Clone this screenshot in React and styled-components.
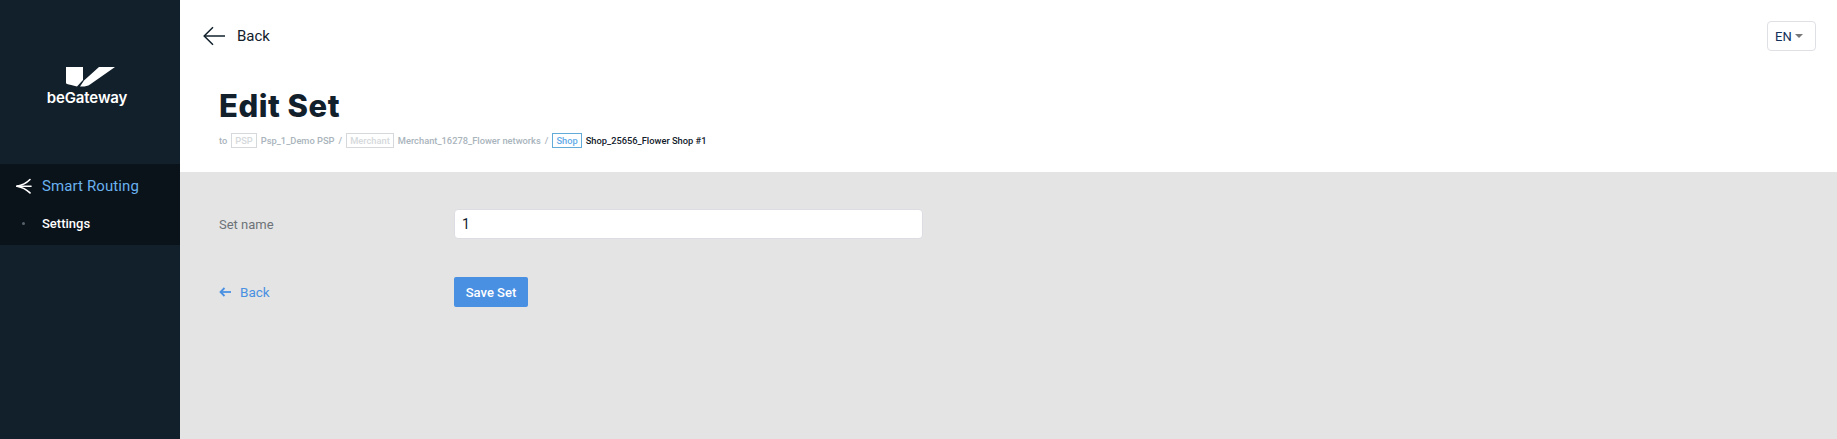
import React from 'react';
import styled, { createGlobalStyle } from 'styled-components';

const GlobalStyle = createGlobalStyle`
  html, body {
    margin: 0;
    padding: 0;
    height: 100%;
    overflow: hidden;
    background: #e4e4e4;
    font-family: Roboto, "Liberation Sans", sans-serif;
  }
  * {
    box-sizing: border-box;
  }
`;

const Page = styled.div`
  display: flex;
  width: 100%;
  height: 100vh;
`;

const Sidebar = styled.aside`
  flex: 0 0 180px;
  background: #12202c;
  display: flex;
  flex-direction: column;
`;

const LogoWrap = styled.div`
  height: 164px;
  padding-top: 67px;
  display: flex;
  flex-direction: column;
  align-items: center;
`;

const LogoName = styled.span`
  margin: 3px 6px 0 0;
  color: #fff;
  font-family: Inter, sans-serif;
  font-size: 15px;
  font-weight: 600;
  line-height: 16px;
  letter-spacing: -0.1px;
`;

const Menu = styled.nav`
  height: 81px;
  background: #0a121a;
  display: flex;
  flex-direction: column;
`;

const MenuTitle = styled.div`
  height: 44px;
  padding-left: 16px;
  display: flex;
  align-items: center;
  gap: 10px;
  color: #69b1ee;
  font-size: 15px;
  letter-spacing: 0.1px;
`;

const MenuItem = styled.div`
  height: 30px;
  padding-left: 22px;
  display: flex;
  align-items: center;
  gap: 17px;
  color: #fff;
  font-size: 13px;
  font-weight: 500;
`;

const Dot = styled.span`
  width: 3px;
  height: 3px;
  border-radius: 50%;
  background: #56626c;
`;

const Main = styled.main`
  flex: 1;
  display: flex;
  flex-direction: column;
  min-width: 0;
`;

const Header = styled.header`
  height: 172px;
  background: #fff;
  padding: 21px 21px 0 23px;
  display: flex;
  flex-direction: column;
`;

const TopRow = styled.div`
  display: flex;
  justify-content: space-between;
  align-items: flex-start;
  height: 30px;
`;

const TopBack = styled.a`
  display: flex;
  align-items: center;
  gap: 12px;
  height: 29px;
  color: #12202c;
  font-size: 15px;
`;

const LangButton = styled.button`
  width: 49px;
  height: 30px;
  padding: 0 0 0 7px;
  background: #fff;
  border: 1px solid #dfdfe6;
  border-radius: 4px;
  display: flex;
  align-items: center;
  gap: 3px;
  color: #12305a;
  font-family: Roboto, sans-serif;
  font-size: 13px;
`;

const Caret = styled.span`
  width: 0;
  height: 0;
  border-left: 4px solid transparent;
  border-right: 4px solid transparent;
  border-top: 4px solid #777;
`;

const Heading = styled.div`
  padding-left: 16px;
`;

const Title = styled.h1`
  margin: 36px 0 0;
  color: #12202c;
  font-family: Inter, sans-serif;
  font-size: 31px;
  font-weight: 800;
  line-height: 38px;
  letter-spacing: 0.5px;
`;

const Crumbs = styled.div`
  margin-top: 7px;
  display: flex;
  align-items: center;
  height: 16px;
  color: #a9b4bc;
  font-size: 9.3px;
  font-weight: 500;
`;

const Tag = styled.span`
  height: 15px;
  padding: 0 3px;
  margin: 0 4px;
  display: inline-flex;
  align-items: center;
  border: 1px solid ${p => (p.$active ? '#63abd8' : '#d5d9dc')};
  color: ${p => (p.$active ? '#63abe8' : '#d5d9dc')};
`;

const Sep = styled.span`
  margin-left: 4px;
`;

const Current = styled.span`
  color: #12202c;
`;

const Content = styled.section`
  flex: 1;
  background: #e4e4e4;
  padding: 37px 0 0 39px;
`;

const Row = styled.div`
  display: flex;
  align-items: center;
  height: 30px;
  margin-bottom: 38px;
`;

const Label = styled.label`
  flex: 0 0 235px;
  color: #6d7278;
  font-size: 13px;
  padding-top: 1px;
`;

const Input = styled.input`
  width: 469px;
  height: 30px;
  padding: 0 7px;
  background: #fff;
  border: 1px solid #dcdce3;
  border-radius: 4px;
  color: #12202c;
  font-family: Roboto, sans-serif;
  font-size: 14px;
`;

const BackLink = styled.a`
  flex: 0 0 235px;
  display: flex;
  align-items: center;
  gap: 9px;
  color: #4a90e2;
  font-size: 13.5px;
`;

const SaveButton = styled.button`
  width: 74px;
  height: 30px;
  padding: 0;
  background: #4a90e2;
  border: 0;
  border-radius: 2px;
  color: #fff;
  font-family: Roboto, sans-serif;
  font-size: 13px;
  font-weight: 500;
`;

const LogoMark = () => (
  <svg width="49" height="20" viewBox="0 0 49 20" fill="#fff">
    <path d="M0 0h17v13l-6 6.500C7 18.500 3 17.500 1 17c-.6-.2-1-.6-1-1.200z" />
    <path d="M33 0h16L24 17.500c-2 1.400-5 2-7.500 2H14l4-6z" />
  </svg>
);

const RouteIcon = () => (
  <svg width="16" height="16" viewBox="0 0 16 16" fill="none" stroke="#fff" strokeWidth="1.6" strokeLinecap="round">
    <path d="M1 8.200h14" />
    <path d="M1 8.200C5 7.500 10 5.500 14 1.500" />
    <path d="M1 8.200c4 .7 9 2.700 13 6.700" />
  </svg>
);

const LongArrow = () => (
  <svg width="22" height="20" viewBox="0 0 22 20" fill="none" stroke="#12202c" strokeWidth="1.5">
    <path d="M22 10H1.500" />
    <path d="M10 1.200 1.200 10l8.800 8.800" />
  </svg>
);

const SmallArrow = () => (
  <svg width="12" height="10" viewBox="0 0 12 10" fill="none" stroke="#4a90e2" strokeWidth="1.8">
    <path d="M12 5H1.500" />
    <path d="M5.500 1 1.500 5l4 4" />
  </svg>
);

export default function App() {
  return (
    <Page>
      <GlobalStyle />
      <Sidebar>
        <LogoWrap>
          <LogoMark />
          <LogoName>beGateway</LogoName>
        </LogoWrap>
        <Menu>
          <MenuTitle>
            <RouteIcon />
            Smart Routing
          </MenuTitle>
          <MenuItem>
            <Dot />
            Settings
          </MenuItem>
        </Menu>
      </Sidebar>
      <Main>
        <Header>
          <TopRow>
            <TopBack>
              <LongArrow />
              Back
            </TopBack>
            <LangButton>
              EN
              <Caret />
            </LangButton>
          </TopRow>
          <Heading>
            <Title>Edit Set</Title>
            <Crumbs>
              to
              <Tag>PSP</Tag>
              Psp_1_Demo PSP
              <Sep>/</Sep>
              <Tag>Merchant</Tag>
              Merchant_16278_Flower networks
              <Sep>/</Sep>
              <Tag $active>Shop</Tag>
              <Current>Shop_25656_Flower Shop #1</Current>
            </Crumbs>
          </Heading>
        </Header>
        <Content>
          <Row>
            <Label>Set name</Label>
            <Input defaultValue="1" />
          </Row>
          <Row>
            <BackLink>
              <SmallArrow />
              Back
            </BackLink>
            <SaveButton>Save Set</SaveButton>
          </Row>
        </Content>
      </Main>
    </Page>
  );
}
